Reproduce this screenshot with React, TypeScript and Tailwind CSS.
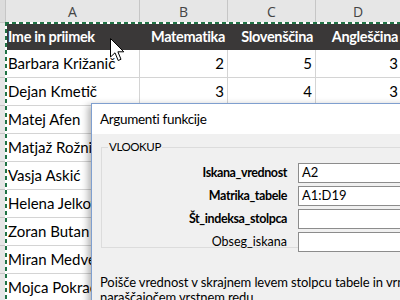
import React from "react";

const rows: [string, number, number, number][] = [
  ["Barbara Križanič", 2, 5, 3],
  ["Dejan Kmetič", 3, 4, 3],
  ["Matej Afen", 4, 3, 5],
  ["Matjaž Rožnik", 5, 2, 4],
  ["Vasja Askić", 3, 3, 2],
  ["Helena Jelkovič", 5, 5, 5],
  ["Zoran Butan", 2, 3, 4],
  ["Miran Medved", 4, 4, 3],
  ["Mojca Pokrac", 3, 5, 4],
];

const cellFont = { fontFamily: "Lato, 'Open Sans', sans-serif" };
const uiFont = { fontFamily: "Lato, 'Noto Sans', sans-serif" };
const letterFont = { fontFamily: "'Open Sans', 'Noto Sans', sans-serif" };

function Cursor() {
  return (
    <svg
      className="absolute left-[110px] top-[38px]"
      width="16"
      height="25"
      viewBox="0 0 16 25"
    >
      <path
        d="M0.5 0.5 L0.5 19 L5 14.8 L8.2 22.5 L11 21.3 L7.9 13.8 L13.8 13.8 Z"
        fill="#fff"
        stroke="#000"
        strokeWidth="1"
        strokeLinejoin="miter"
      />
    </svg>
  );
}

const fields: [string, string, boolean][] = [
  ["Iskana_vrednost", "A2", true],
  ["Matrika_tabele", "A1:D19", true],
  ["Št_indeksa_stolpca", "", true],
  ["Obseg_iskana", "", false],
];

export default function App() {
  return (
    <div className="relative w-[400px] h-[300px] overflow-hidden bg-white">
      {/* Column header bar */}
      <div
        className="grid grid-cols-[6px_134px_88px_88px_1fr] h-[23px] bg-[#e6e6e6] border-b border-[#c6c6c6] text-[14px] text-[#444]"
        style={letterFont}
      >
        <div className="border-r border-[#c6c6c6] bg-[#dcdcdc]" />
        <div className="flex items-center justify-center border-r border-[#c6c6c6]">A</div>
        <div className="flex items-center justify-center border-r border-[#c6c6c6]">B</div>
        <div className="flex items-center justify-center border-r border-[#c6c6c6]">C</div>
        <div className="flex items-center justify-start pl-[37px]">D</div>
      </div>

      {/* Header row */}
      <div
        className="grid grid-cols-[6px_134px_88px_88px_1fr] h-[27px] text-[14.5px] tracking-[-0.35px] font-bold text-white"
        style={cellFont}
      >
        <div className="bg-[#e6e6e6] border-r border-[#c6c6c6]" />
        <div className="bg-[#3a3838] flex items-center pl-[2px]">Ime in priimek</div>
        <div className="bg-[#3a3838] flex items-center justify-end pr-[3px]">Matematika</div>
        <div className="bg-[#3a3838] flex items-center justify-end pr-[3px]">Slovenščina</div>
        <div className="bg-[#3a3838] flex items-center justify-end pr-[2px] whitespace-nowrap overflow-hidden">
          Angleščina
        </div>
      </div>

      {/* Data rows */}
      {rows.map((r) => (
        <div
          key={r[0]}
          className="grid grid-cols-[6px_134px_88px_88px_1fr] h-[28px] text-[15px] text-black"
          style={cellFont}
        >
          <div className="bg-[#e6e6e6] border-r border-b border-[#c6c6c6]" />
          <div className="flex items-center pl-[2px] border-r border-b border-[#d4d4d4] whitespace-nowrap overflow-hidden">
            {r[0]}
          </div>
          <div className="flex items-center justify-end pr-[3px] border-r border-b border-[#d4d4d4]">{r[1]}</div>
          <div className="flex items-center justify-end pr-[3px] border-r border-b border-[#d4d4d4]">{r[2]}</div>
          <div className="flex items-center justify-end pr-[2px] border-b border-[#d4d4d4]">{r[3]}</div>
        </div>
      ))}

      {/* Copy selection marquee */}
      <div className="absolute left-[5px] top-[22px] w-[400px] h-[2px] bg-[repeating-linear-gradient(90deg,#217346_0_4px,#ffffff_4px_7px)]" />
      <div className="absolute left-[5px] top-[22px] w-[2px] h-[300px] bg-[repeating-linear-gradient(180deg,#217346_0_4px,#ffffff_4px_7px)]" />

      <Cursor />

      {/* Function arguments dialog */}
      <div
        className="absolute left-[91px] top-[103px] w-[330px] h-[220px] border border-[#7f9fcf] bg-[#f0f0f0] shadow-[-3px_2px_7px_rgba(0,0,0,0.3)] flex flex-col"
        style={uiFont}
      >
        <div className="h-[30px] bg-white flex items-center pl-[8px] text-[13.5px] tracking-[-0.3px] text-black">
          Argumenti funkcije
        </div>
        <div className="pl-[9px] pt-[6px]">
          <fieldset className="border border-[#dcdcdc] h-[108px] pl-0">
            <legend className="ml-[6px] px-[1px] text-[11.5px] tracking-[-0.4px] leading-[14px] text-black">VLOOKUP</legend>
            <div className="flex flex-col gap-[3px] mt-[9px]">
              {fields.map(([label, val, bold]) => (
                <div key={label} className="flex items-center h-[20px]">
                  <div
                    className={`w-[185px] text-right text-black ${bold ? "font-bold text-[12.5px] tracking-[-0.4px]" : "text-[12.5px]"}`}
                  >
                    {label}
                  </div>
                  <div className="ml-[11px] h-[20px] w-[140px] bg-white border border-[#8c8c8c] flex items-center pl-[3px] text-[13px] text-black">
                    {val}
                  </div>
                </div>
              ))}
            </div>
          </fieldset>
        </div>
        <div className="pl-[8px] pt-[27px] text-[13px] tracking-[-0.1px] leading-[15px] text-black whitespace-nowrap">
          <div>Poišče vrednost v skrajnem levem stolpcu tabele in vrne vrednost</div>
          <div>naraščajočem vrstnem redu.</div>
        </div>
      </div>
    </div>
  );
}
